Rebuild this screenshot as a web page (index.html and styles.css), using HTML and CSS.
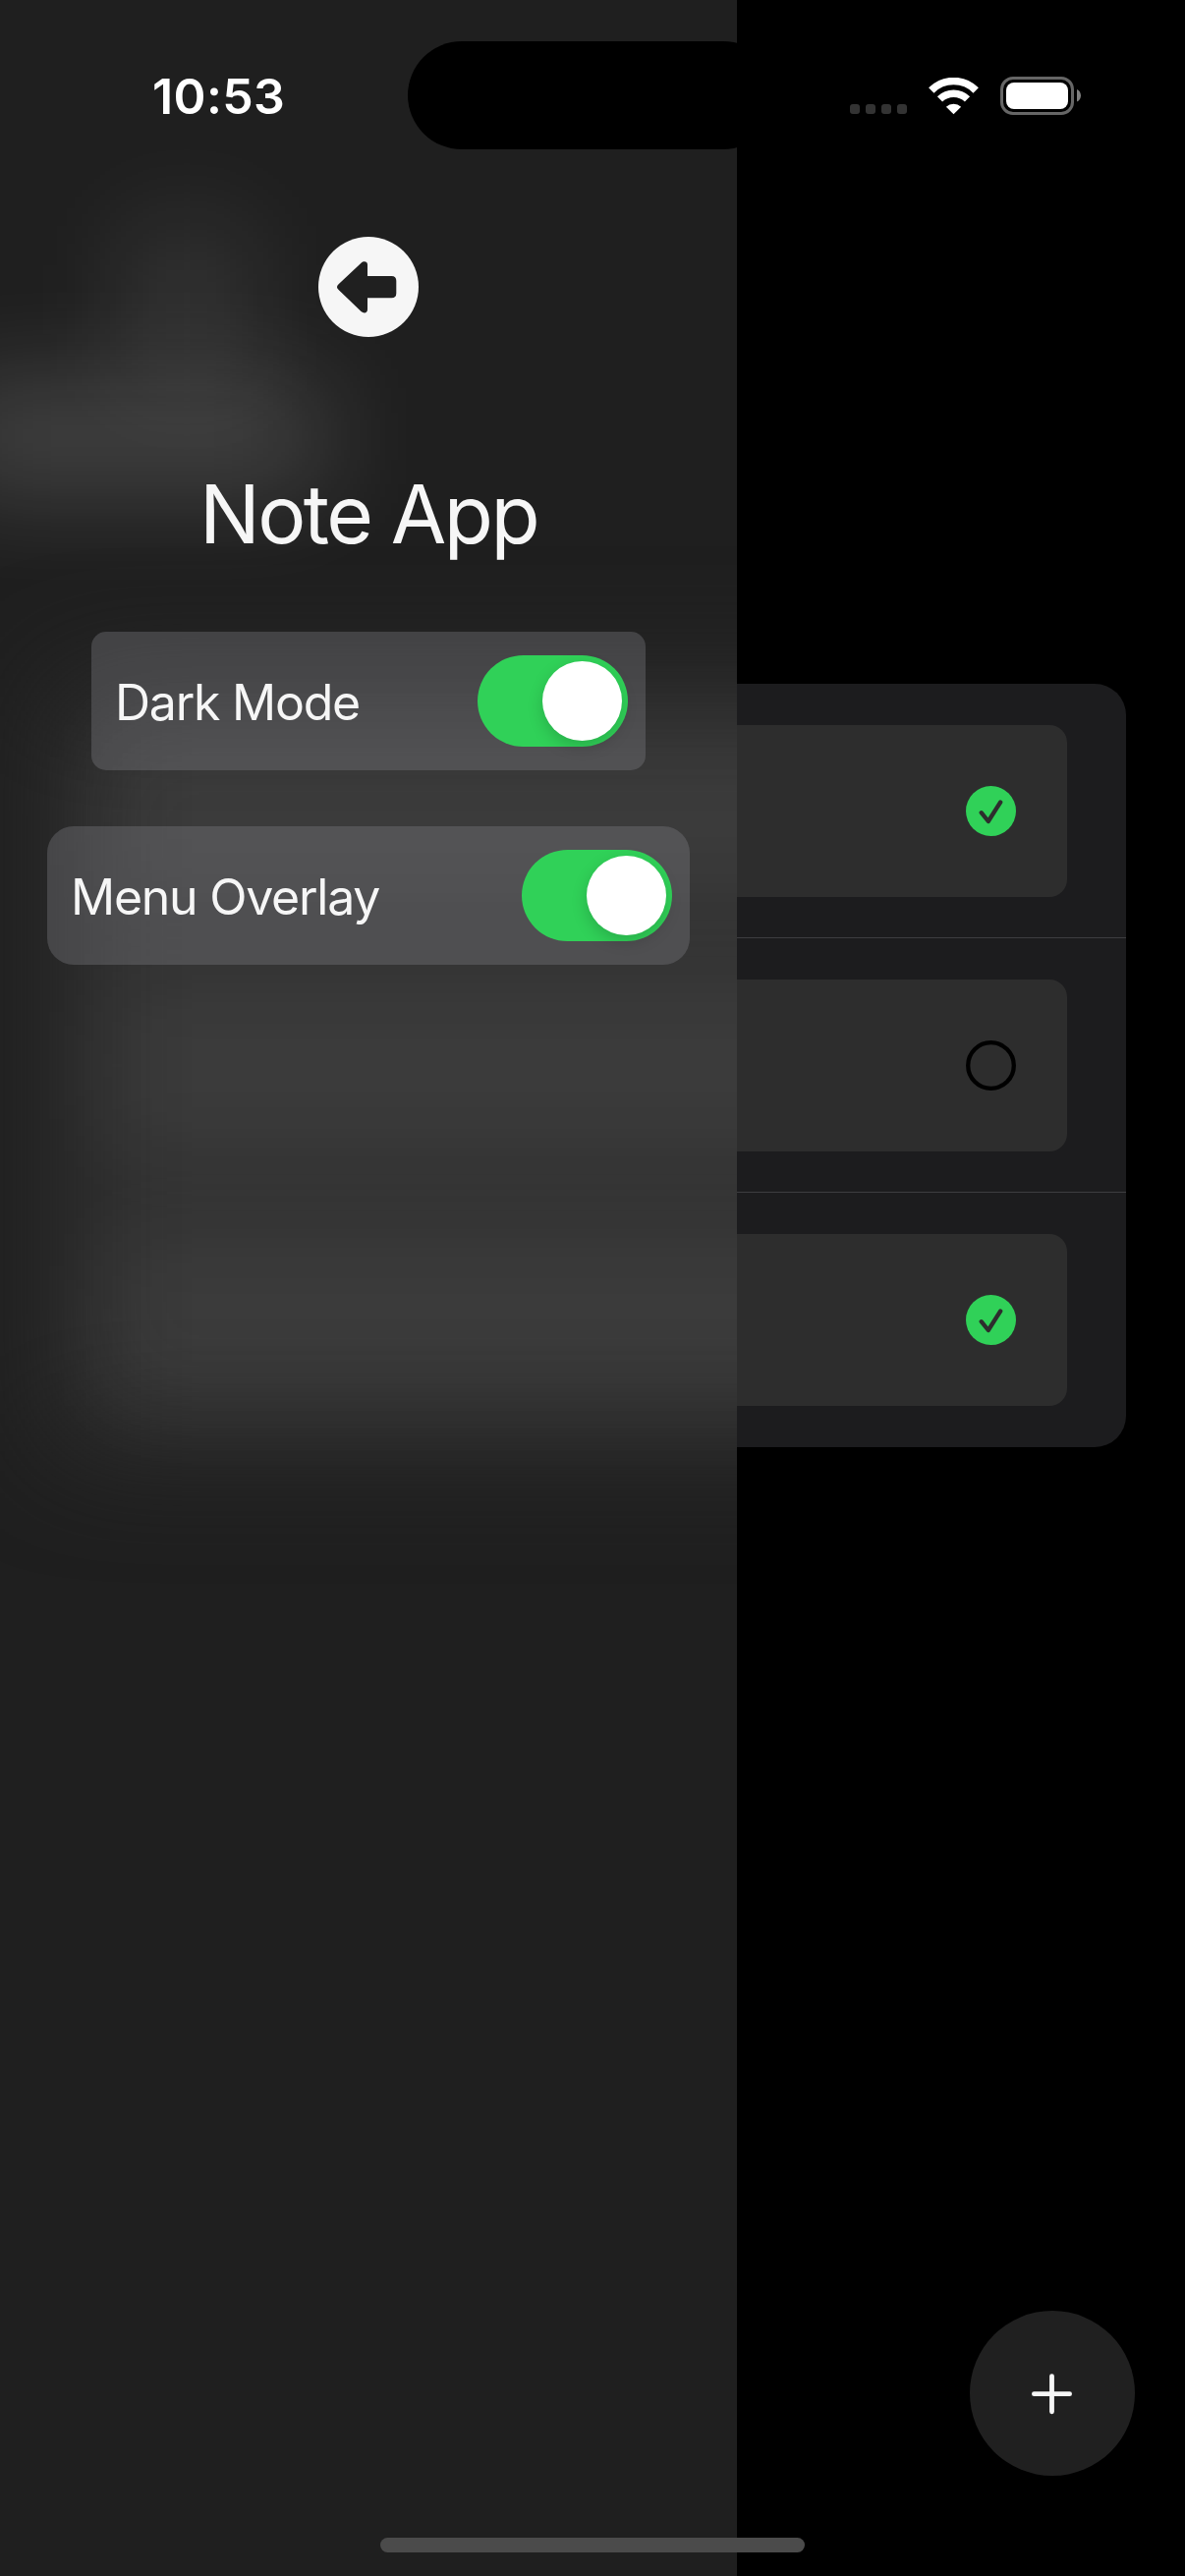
FILE: index.html
```html
<!DOCTYPE html>
<html lang="en">
<head>
<meta charset="utf-8">
<title>Note App</title>
<link rel="stylesheet" href="styles.css">
</head>
<body>
<div class="screen">
  <main class="notes">
    <ul class="note-list">
      <li class="note-row"><div class="note">
        <svg class="check" viewBox="0 0 51 51"><circle cx="25.5" cy="25.5" r="25.5" fill="#30d158"/><path d="M15.7 27.2L22.8 36L35.2 16.5" fill="none" stroke="#2d2d2d" stroke-width="4.3" stroke-linecap="round" stroke-linejoin="round"/></svg>
      </div></li>
      <li class="note-row"><div class="note">
        <svg class="check" viewBox="0 0 51 51"><circle cx="25.5" cy="25.5" r="23.3" fill="none" stroke="#000" stroke-width="4.3"/></svg>
      </div></li>
      <li class="note-row"><div class="note">
        <svg class="check" viewBox="0 0 51 51"><circle cx="25.5" cy="25.5" r="25.5" fill="#30d158"/><path d="M15.7 27.2L22.8 36L35.2 16.5" fill="none" stroke="#2d2d2d" stroke-width="4.3" stroke-linecap="round" stroke-linejoin="round"/></svg>
      </div></li>
    </ul>
  </main>

  <button class="add" aria-label="Add note">
    <svg width="42" height="42" viewBox="0 0 42 42"><path d="M20.5 2.6V38.8M2.4 20.7H38.6" stroke="#f6f6f6" stroke-width="4.8" stroke-linecap="round"/></svg>
  </button>

  <aside class="drawer">
    <div class="glow glow-list"></div>
    <div class="glow glow-note first"></div>
    <div class="glow glow-note second"></div>
    <div class="glow glow-note third"></div>
    <div class="glow glow-title"></div>
    <div class="glow glow-nav"></div>
    <div class="drawer-content">
      <button class="back" aria-label="Back">
        <svg width="102" height="102" viewBox="0 0 102 102"><circle cx="51" cy="51" r="51" fill="#f6f6f6"/><path d="M20.6 48.2L43.5 26.7C46 24.4 50 24.7 50 28.6V40H74.5Q79.3 40 79.3 44.8V57.4Q79.3 62.2 74.5 62.2H50V74C50 78 46 78.3 43.5 76L20.6 54Q17.3 51.1 20.6 48.2Z" fill="#202020"/></svg>
      </button>
      <h1 class="title">Note App</h1>
      <label class="setting dark"><span class="label">Dark Mode</span><span class="toggle"><span class="knob"></span></span></label>
      <label class="setting overlay"><span class="label">Menu Overlay</span><span class="toggle"><span class="knob"></span></span></label>
    </div>
  </aside>

  <header class="status">
    <div class="time">10:53</div>
    <div class="island"></div>
    <div class="indicators">
      <div class="signal"><i></i><i></i><i></i><i></i></div>
      <svg class="wifi" width="51" height="38" viewBox="0 0 51 38"><g fill="none" stroke="#fff"><path d="M2.8 13A32 32 0 0 1 48.2 13" stroke-width="7.6"/><path d="M11.5 21.9A20 20 0 0 1 39.5 21.9" stroke-width="7.4"/></g><path d="M25.5 37.3L17.9 29.7A11 11 0 0 1 33.1 29.7Z" fill="#fff"/></svg>
      <svg class="battery" width="83" height="39" viewBox="0 0 83 39"><rect x="1.5" y="1.5" width="72" height="36" rx="11.5" fill="none" stroke="#666" stroke-width="3"/><rect x="6" y="6" width="63" height="27" rx="8" fill="#fff"/><path d="M78 13C83.3 15.3 83.3 23.3 78 25.5Z" fill="#808080"/></svg>
    </div>
  </header>
  <div class="home-bar"></div>
</div>
</body>
</html>
```
FILE: styles.css
```css
* { box-sizing: border-box; }
body { margin: 0; background: #000; font-family: Inter, "Liberation Sans", sans-serif; }
button { padding: 0; border: 0; background: none; }
svg { display: block; }

.screen { position: relative; width: 1206px; height: 2622px; overflow: hidden; background: #000; color: #f6f6f6; }

.notes { padding: 696px 60px 0; }
.note-list { margin: 0; padding: 0; list-style: none; background: #1c1c1e; border-radius: 32px; overflow: hidden; }
.note-row { height: 259px; padding: 42px 60px 41px; border-bottom: 1px solid #3d3d40; }
.note-row:last-child { border-bottom: 0; }
.note { display: flex; align-items: center; justify-content: flex-end; height: 175px; padding-right: 52px; border-radius: 18px; background: #2d2d2d; }
.check { width: 51px; height: 51px; }

.add { position: absolute; left: 987px; top: 2352px; width: 168px; height: 168px; padding: 1px 0 0; border-radius: 50%; background: #202020; display: flex; align-items: center; justify-content: center; }

.drawer { position: absolute; left: 0; top: 0; width: 750px; height: 2622px; overflow: hidden; background: #1f1f1f; }
.glow { position: absolute; }
.glow-list { left: 60px; top: 700px; width: 890px; height: 768px; background: #313131; filter: blur(60px); }
.glow-note { left: 110px; width: 860px; height: 175px; background: rgba(255, 255, 255, .055); filter: blur(50px); }
.first { top: 738px; }
.second { top: 997px; }
.third { top: 1256px; }
.glow-title { left: -60px; top: 392px; width: 390px; height: 104px; background: rgba(255, 255, 255, .18); filter: blur(54px); }
.glow-nav { left: 130px; top: 230px; width: 120px; height: 150px; background: rgba(255, 255, 255, .11); filter: blur(56px); }

.drawer-content { position: relative; display: flex; flex-direction: column; align-items: center; padding-top: 241px; }
.back { width: 102px; height: 102px; }
.title { height: 100px; margin: 131px 0 69px; font-size: 82px; line-height: 100px; font-weight: 400; white-space: nowrap; letter-spacing: -2.6px; }
.setting { display: flex; align-items: center; justify-content: space-between; height: 141px; background: rgba(128, 128, 132, .36); }
.dark { width: 564px; padding: 0 18px 0 24px; border-radius: 15px; }
.overlay { width: 654px; margin-top: 57px; padding: 0 18px 0 24px; border-radius: 27px; }
.label { padding-top: 3px; font-size: 50px; line-height: 60px; letter-spacing: -1.25px; white-space: nowrap; }
.toggle { display: flex; justify-content: flex-end; width: 153px; height: 93px; padding: 6px; border-radius: 46.5px; background: #30d158; }
.knob { width: 81px; height: 81px; border-radius: 50%; background: #fff; box-shadow: 0 6px 16px rgba(0, 0, 0, .17); }

.status { position: absolute; left: 0; top: 0; width: 1206px; height: 194px; display: flex; align-items: flex-start; color: #fff; }
.time { width: 415px; padding: 68px 0 0 155px; font-size: 50px; line-height: 60px; font-weight: 600; letter-spacing: .4px; white-space: nowrap; }
.island { width: 376px; height: 110px; margin-top: 42px; border-radius: 55px; background: #000; }
.indicators { display: flex; align-items: flex-start; padding: 78px 0 0 74px; }
.signal { display: flex; gap: 6px; margin-top: 28px; }
.signal i { width: 10px; height: 10px; border-radius: 3px; background: #333; }
.wifi { margin: 1px 0 0 22px; }
.battery { margin-left: 22px; }
.home-bar { position: absolute; left: 387px; top: 2583px; width: 432px; height: 15px; border-radius: 8px; background: #4b4b4b; }
```
